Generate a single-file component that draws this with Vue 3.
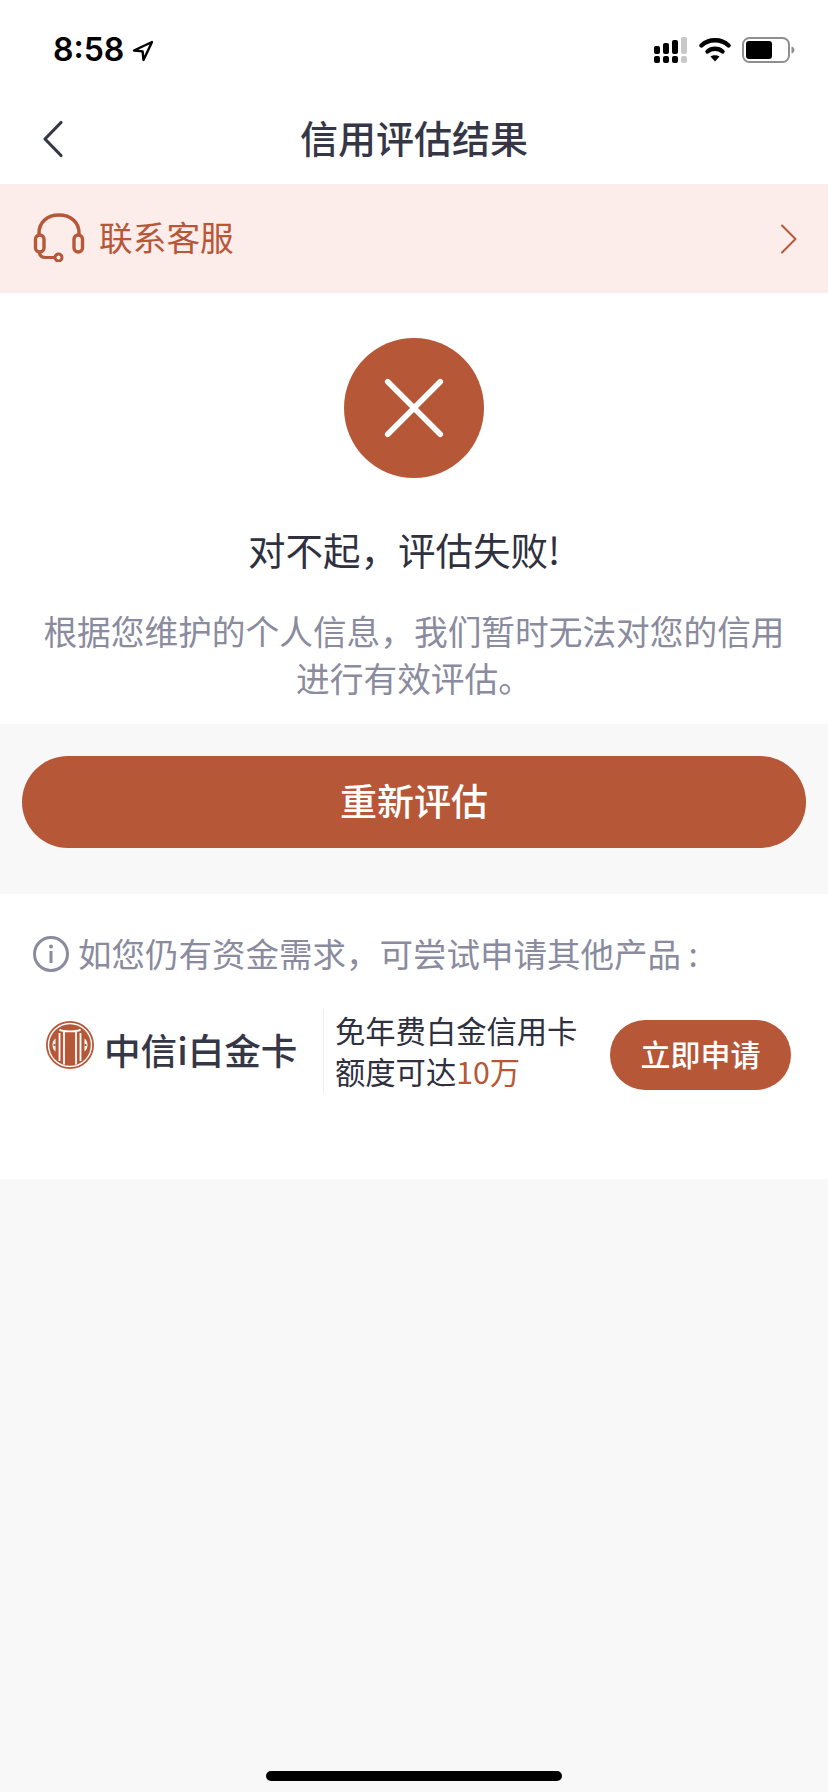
<script setup>
const brand = "#b65738";
</script>

<template>
  <div class="page">
    <div class="status">
      <div class="time">
        <span>8:58</span>
        <svg class="loc" width="22" height="22" viewBox="0 0 22 22">
          <path d="M20 2 2 10.500l8.600.9.9 8.600z" fill="none" stroke="#000" stroke-width="2.400" stroke-linejoin="round" />
        </svg>
      </div>
      <div class="status-icons">
        <svg width="34" height="26" viewBox="0 0 34 26">
          <rect x="0" y="9" width="6" height="8" rx="2" fill="#000" />
          <rect x="9" y="6" width="6" height="11" rx="2" fill="#000" />
          <rect x="18" y="3" width="6" height="14" rx="2" fill="#000" />
          <rect x="27" y="0" width="6" height="17" rx="2" fill="#c8c8c8" />
          <rect x="0" y="19" width="6" height="7" rx="2" fill="#000" />
          <rect x="9" y="19" width="6" height="7" rx="2" fill="#000" />
          <rect x="18" y="19" width="6" height="7" rx="2" fill="#000" />
          <rect x="27" y="19" width="6" height="7" rx="2" fill="#c8c8c8" />
        </svg>
        <svg width="32" height="25" viewBox="0 0 32 25">
          <path d="M2.500 8.500C9.700 1.500 22.300 1.500 29.500 8.500" fill="none" stroke="#000" stroke-width="4.400" stroke-linecap="round" />
          <path d="M8.500 14.500C12.500 10.800 19.500 10.800 23.500 14.500" fill="none" stroke="#000" stroke-width="4.400" stroke-linecap="round" />
          <path d="M16 24.500 11.500 19.600C14 17.700 18 17.700 20.500 19.600z" fill="#000" />
        </svg>
        <svg width="53" height="26" viewBox="0 0 53 26">
          <rect x="1" y="1" width="46" height="24" rx="6.500" fill="none" stroke="#8f8f8f" stroke-width="2" />
          <rect x="4" y="4" width="26" height="18" rx="3" fill="#000" />
          <path d="M49.500 9.500c2 .6 3 2 3 3.500s-1 2.900-3 3.500z" fill="#8f8f8f" />
        </svg>
      </div>
    </div>

    <div class="nav">
      <svg class="back" width="24" height="38" viewBox="0 0 24 38">
        <path d="M20 2.500 4 19l16 16.500" fill="none" stroke="#353746" stroke-width="3.200" stroke-linecap="round" stroke-linejoin="round" />
      </svg>
      <h1 class="nav-title">信用评估结果</h1>
    </div>

    <div class="service">
      <svg class="headset" width="52" height="50" viewBox="0 0 52 50">
        <path d="M6 24V21C6 10 14.500 3 26 3s20 7 20 18v3" fill="none" :stroke="brand" stroke-width="3.400" />
        <rect x="2.500" y="23" width="8.500" height="17" rx="4.200" fill="none" :stroke="brand" stroke-width="3.400" />
        <rect x="41" y="23" width="8.500" height="17" rx="4.200" fill="none" :stroke="brand" stroke-width="3.400" />
        <path d="M6.500 40c0 4 2.500 5.500 6 5.500h9.500" fill="none" :stroke="brand" stroke-width="3.200" />
        <circle cx="25.500" cy="45.500" r="3.500" fill="none" :stroke="brand" stroke-width="3" />
      </svg>
      <span class="service-text">联系客服</span>
      <svg class="chevron" width="18" height="30" viewBox="0 0 18 30">
        <path d="M2 1.500 15.500 15 2 28.500" fill="none" :stroke="brand" stroke-width="2" stroke-linecap="round" stroke-linejoin="round" />
      </svg>
    </div>

    <div class="result">
      <div class="fail-circle">
        <svg width="60" height="60" viewBox="0 0 64 64">
          <path d="M4 4 60 60M60 4 4 60" fill="none" stroke="#fff" stroke-width="6" stroke-linecap="round" />
        </svg>
      </div>
      <div class="result-title">对不起，评估失败!</div>
      <p class="result-desc">根据您维护的个人信息，我们暂时无法对您的信用<br />进行有效评估。</p>
    </div>

    <div class="action">
      <button class="retry">重新评估</button>
    </div>

    <div class="other">
      <div class="tip">
        <svg width="38" height="38" viewBox="0 0 38 38">
          <circle cx="19" cy="19" r="16.500" fill="none" stroke="#8a8b9e" stroke-width="3" />
          <rect x="17.500" y="16" width="3" height="12" fill="#8a8b9e" />
          <circle cx="19" cy="11.500" r="2" fill="#8a8b9e" />
        </svg>
        <span>如您仍有资金需求，可尝试申请其他产品 :</span>
      </div>
      <div class="product">
        <div class="brand">
          <svg class="logo" width="48" height="48" viewBox="0 0 48 48">
            <circle cx="24" cy="24" r="24" :fill="brand" />
            <circle cx="24" cy="24" r="21.500" fill="none" stroke="#fff" stroke-width="1.400" />
            <path d="M13.500 8.500C16 11 32 11 34.500 8.500M13.500 12V40M18 11V43.500M30 11V43.500M34.500 12V40" fill="none" stroke="#fff" stroke-width="1.800" />
            <path d="M9.500 17.500C5.500 20 5.500 28 9.500 30.500ZM38.500 17.500C42.500 20 42.500 28 38.500 30.500Z" fill="#fff" />
            <path d="M9.500 24h-2M38.500 24h2" :stroke="brand" stroke-width="2" />
          </svg>
          <span class="brand-name">中信i白金卡</span>
        </div>
        <div class="pitch">
          <div>免年费白金信用卡</div>
          <div>额度可达<em>10万</em></div>
        </div>
        <button class="apply">立即申请</button>
      </div>
    </div>

    <div class="home-bar"></div>
  </div>
</template>

<style scoped>
.page {
  position: relative;
  width: 828px;
  height: 1792px;
  overflow: hidden;
  background: #f8f8f8;
  font-family: "Noto Sans CJK SC", "Noto Sans", sans-serif;
}

.status {
  display: flex;
  justify-content: space-between;
  align-items: center;
  height: 92px;
  padding: 7px 33px 0 53px;
  box-sizing: border-box;
  background: #fff;
}

.time {
  display: flex;
  align-items: center;
  gap: 8px;
  font-family: Inter, sans-serif;
  font-size: 32px;
  font-weight: 600;
  color: #000;
}

.loc {
  margin-top: 2px;
}

.status-icons {
  display: flex;
  align-items: center;
  gap: 11px;
}

.nav {
  position: relative;
  display: flex;
  justify-content: center;
  align-items: center;
  height: 92px;
  background: #fff;
}

.back {
  position: absolute;
  left: 41px;
  top: 28px;
}

.nav-title {
  margin: 0;
  padding-bottom: 4px;
  font-size: 38px;
  font-weight: 500;
  color: #353746;
}

.service {
  display: flex;
  align-items: center;
  height: 109px;
  padding: 0 30px 0 33px;
  background: #fcecea;
}

.headset {
  margin: 0 14px 3px 0;
}

.service-text {
  flex: 1;
  padding-bottom: 4px;
  font-size: 33.700px;
  color: #b65738;
}

.result {
  display: flex;
  flex-direction: column;
  align-items: center;
  height: 431px;
  padding-top: 45px;
  box-sizing: border-box;
  background: #fff;
}

.fail-circle {
  display: flex;
  justify-content: center;
  align-items: center;
  width: 140px;
  height: 140px;
  border-radius: 50%;
  background: #b65738;
}

.result-title {
  margin-top: 45px;
  padding-right: 20px;
  font-size: 37.500px;
  line-height: 52px;
  color: #2f3040;
}

.result-desc {
  margin: 32px 0 0;
  font-size: 33.700px;
  line-height: 47px;
  text-align: center;
  color: #8a8b9e;
}

.action {
  height: 170px;
  padding: 32px 22px 0;
  box-sizing: border-box;
}

.retry {
  display: block;
  width: 100%;
  height: 92px;
  padding: 0 0 4px;
  border: 0;
  border-radius: 46px;
  background: #b65738;
  color: #fff;
  font-family: inherit;
  font-size: 37px;
  font-weight: 500;
}

.other {
  height: 285px;
  padding: 34px 0 0 32px;
  box-sizing: border-box;
  background: #fff;
}

.tip {
  display: flex;
  align-items: center;
  gap: 8px;
  font-size: 33.500px;
  color: #8a8b9e;
}

.tip span {
  padding-bottom: 2px;
}

.product {
  display: flex;
  align-items: center;
  margin-top: 30px;
}

.brand {
  display: flex;
  align-items: center;
  gap: 10px;
  width: 292px;
  height: 85px;
  padding-left: 14px;
  box-sizing: border-box;
  border-right: 1px solid #eeeeee;
}

.logo {
  margin-bottom: 14px;
}

.brand-name {
  padding-bottom: 5px;
  font-size: 36.600px;
  font-weight: 500;
  color: #353746;
  white-space: nowrap;
}

.pitch {
  width: 275px;
  margin: 0 0 2px 11px;
  font-size: 30.300px;
  line-height: 41px;
  color: #2f3040;
}

.pitch em {
  font-style: normal;
  color: #b65738;
}

.apply {
  width: 181px;
  height: 70px;
  margin-top: 7px;
  padding: 0 0 4px;
  border: 0;
  border-radius: 35px;
  background: #b65738;
  color: #fff;
  font-family: inherit;
  font-size: 30px;
  font-weight: 500;
}

.home-bar {
  position: absolute;
  left: 266px;
  bottom: 11px;
  width: 296px;
  height: 10px;
  border-radius: 5px;
  background: #000;
}
</style>
